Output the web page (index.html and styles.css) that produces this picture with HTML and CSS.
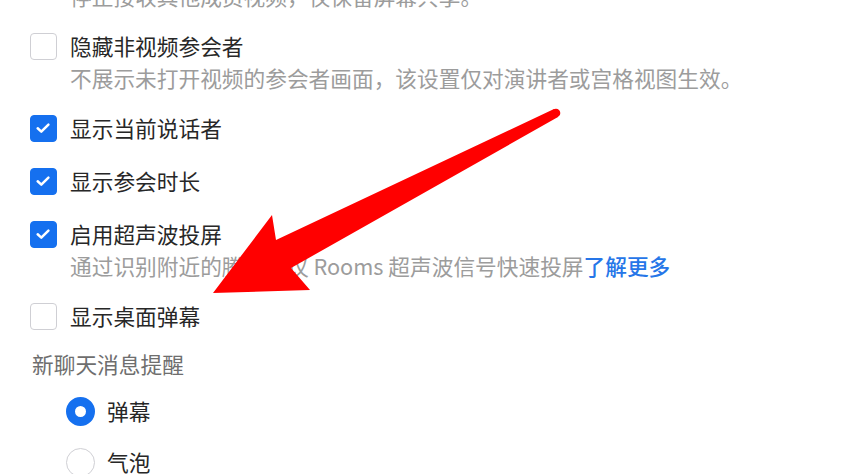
FILE: index.html
```html
<!DOCTYPE html>
<html lang="zh-CN">
<head>
<meta charset="utf-8">
<title>设置</title>
<link rel="stylesheet" href="styles.css">
</head>
<body>
<main class="settings">
  <p class="desc cut">停止接收其他成员视频，仅保留屏幕共享。</p>

  <div class="option with-desc">
    <span class="box"></span>
    <span class="title">隐藏非视频参会者</span>
    <p class="desc">不展示未打开视频的参会者画面，该设置仅对演讲者或宫格视图生效。</p>
  </div>

  <div class="option">
    <span class="box on"><svg viewBox="0 0 27 27"><polyline points="7.5,13.8 11.6,17.6 19.6,9.6"/></svg></span>
    <span class="title">显示当前说话者</span>
  </div>

  <div class="option">
    <span class="box on"><svg viewBox="0 0 27 27"><polyline points="7.5,13.8 11.6,17.6 19.6,9.6"/></svg></span>
    <span class="title">显示参会时长</span>
  </div>

  <div class="option with-desc">
    <span class="box on"><svg viewBox="0 0 27 27"><polyline points="7.5,13.8 11.6,17.6 19.6,9.6"/></svg></span>
    <span class="title">启用超声波投屏</span>
    <p class="desc">通过识别附近的腾讯会议 Rooms 超声波信号快速投屏<a class="link">了解更多</a></p>
  </div>

  <div class="option">
    <span class="box"></span>
    <span class="title">显示桌面弹幕</span>
  </div>

  <section class="notify">
    <div class="notify-title">新聊天消息提醒</div>
    <div class="radio"><span class="dot on"></span><span class="title">弹幕</span></div>
    <div class="radio"><span class="dot"></span><span class="title">气泡</span></div>
  </section>
</main>

<svg class="arrow" viewBox="0 0 842 474" width="842" height="474">
  <polygon points="554,109 276,240 272,215 213,293 310,290 291,268 558,117"/>
  <circle cx="556" cy="113" r="4.3"/>
</svg>
</body>
</html>
```

FILE: styles.css
```css
html, body {
  margin: 0;
  padding: 0;
  background: #ffffff;
  overflow: hidden;
}

body {
  width: 842px;
  height: 474px;
  position: relative;
  font-family: "Noto Sans CJK SC", "Noto Sans", sans-serif;
  font-size: 21.7px;
  color: #272727;
}

.settings {
  display: flex;
  flex-direction: column;
  gap: 21px;
  padding-left: 30px;
  margin-top: -20px;
}

.desc {
  margin: 0;
  font-size: 21.7px;
  line-height: 32px;
  color: #9c9c9c;
  white-space: nowrap;
}

.cut {
  padding-left: 40px;
  margin-bottom: -3px;
}

.option {
  display: grid;
  grid-template-columns: 27px auto;
  column-gap: 13px;
  align-items: center;
}

.option.with-desc {
  margin-bottom: -3px;
}

.option .desc {
  grid-column: 2;
}

.title {
  line-height: 32px;
  white-space: nowrap;
}

.box {
  width: 27px;
  height: 27px;
  box-sizing: border-box;
  border: 1.5px solid #cfcfd4;
  border-radius: 4px;
  background: #fff;
  display: block;
}

.box.on {
  background: #1570ef;
  border-color: #1570ef;
}

.box svg {
  display: block;
  width: 24px;
  height: 24px;
  fill: none;
  stroke: #ffffff;
  stroke-width: 2.8;
  stroke-linecap: round;
  stroke-linejoin: round;
}

.link {
  color: #2676e8;
  font-weight: 500;
}

.notify {
  display: flex;
  flex-direction: column;
  gap: 15px;
  margin-top: -5px;
}

.notify-title {
  padding-left: 2px;
  line-height: 32px;
  color: #6e6e6e;
}

.radio {
  display: flex;
  align-items: center;
  gap: 12px;
  padding-left: 36px;
}

.radio + .radio {
  margin-top: 4px;
}

.dot {
  width: 29px;
  height: 29px;
  box-sizing: border-box;
  border-radius: 50%;
  border: 1.5px solid #cfcfd4;
  background: #fff;
}

.dot.on {
  border: 9.5px solid #1570ef;
}

.arrow {
  position: absolute;
  left: 0;
  top: 0;
  fill: #ff0000;
  pointer-events: none;
}
```
